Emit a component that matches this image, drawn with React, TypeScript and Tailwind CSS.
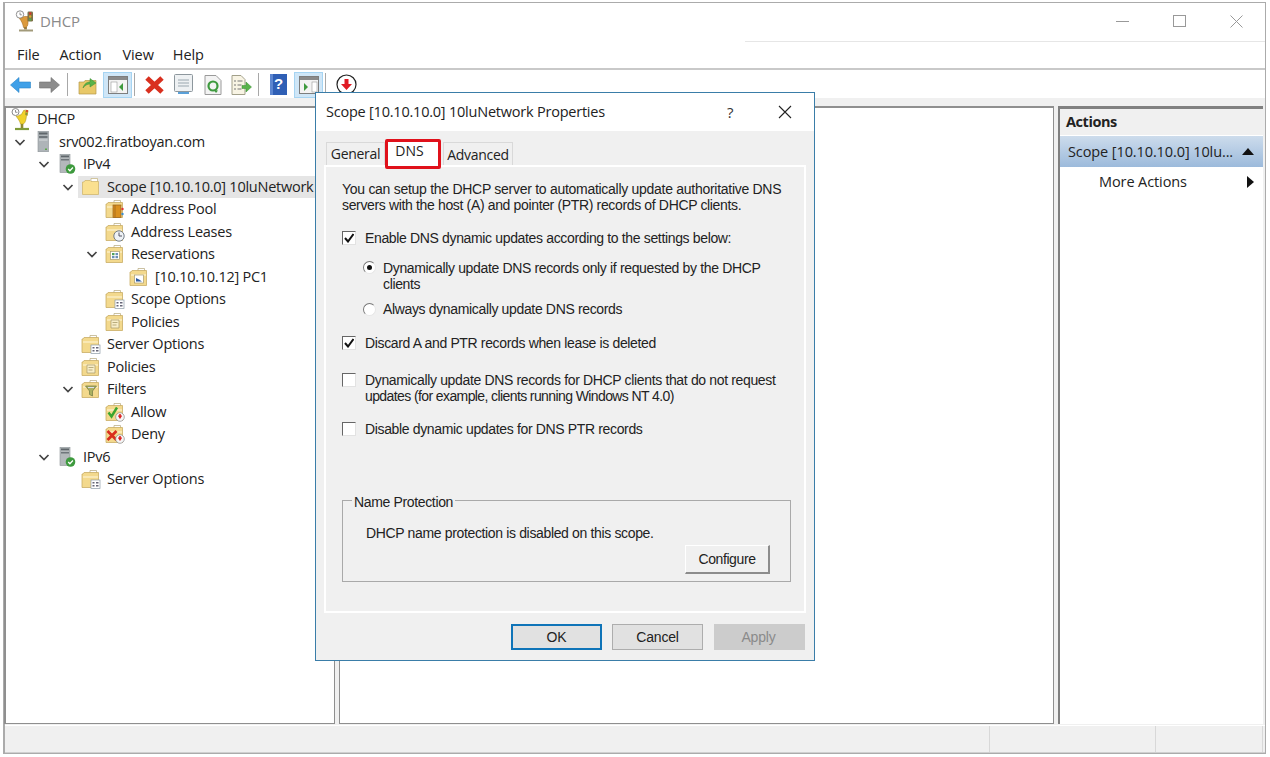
import React from "react";

const ui = "font-['Open_Sans','Noto_Sans',sans-serif]";
const dlg = "font-['Liberation_Sans',Arial,sans-serif]";

const Trophy = () => (
  <svg width="20" height="23" viewBox="0 0 20 23" className="shrink-0 -ml-[1px]">
    <circle cx="4.500" cy="4" r="3.500" fill="#fff" stroke="#8a8a8a" strokeWidth="1" />
    <path d="M4.500 2v2.300h2" fill="none" stroke="#777" strokeWidth=".8" />
    <path d="M5 8c3 1 3-2 5-1l3-5 3 2-1 7c-.5 3-2 5-3 5H9.500C9 13 7 11 5 8z" fill="#f0d22c" stroke="#b59a20" strokeWidth=".6" />
    <path d="M14.500 1.500l3 1-1 5.500-2.500-1z" fill="#c2a035" />
    <circle cx="16" cy="3" r="1" fill="#d9342a" />
    <circle cx="15.500" cy="6" r="1" fill="#7a9a3a" />
    <path d="M11 16v4" stroke="#8f8a30" strokeWidth="2.600" />
    <path d="M4 21h14" stroke="#7f9a3a" strokeWidth="2.200" />
  </svg>
);

const TitleTrophy = () => (
  <svg width="20" height="22" viewBox="0 0 20 22" className="shrink-0">
    <circle cx="5" cy="4.500" r="3.700" fill="#fff" stroke="#8f8f8f" strokeWidth="1" />
    <path d="M5 2.500v2.300h1.800" fill="none" stroke="#777" strokeWidth=".8" />
    <path d="M4.500 8.500c3 .5 3-2 5-2h3.500v6.500c0 3-1.500 4.500-3 4.500H8.500C8 14 6.500 11 4.500 8.500z" fill="#dc9a3c" stroke="#a8702a" strokeWidth=".6" />
    <rect x="12.500" y="1.500" width="5.500" height="10" rx="1.200" fill="#7d7348" />
    <circle cx="15.200" cy="3.500" r="1.200" fill="#d9342a" />
    <circle cx="15.200" cy="6.500" r="1.200" fill="#e0a92a" />
    <circle cx="15.200" cy="9.500" r="1.200" fill="#5aa84a" />
    <path d="M10.500 17v2.500" stroke="#9a7a3a" strokeWidth="2.800" />
    <path d="M4 20.500h14" stroke="#a29a7a" strokeWidth="2" />
  </svg>
);

const Chevron = () => (
  <svg width="14" height="14" viewBox="0 0 14 14">
    <path d="M2.500 5l4.500 4.500L11.500 5" fill="none" stroke="#444" strokeWidth="1.700" />
  </svg>
);

const Server = () => (
  <svg width="20" height="21" viewBox="0 0 20 21" className="shrink-0">
    <rect x="5" y="0" width="10.500" height="21" fill="#aeb4b8" stroke="#8d9396" strokeWidth=".6" />
    <rect x="6" y="1.500" width="8.500" height="2" fill="#5f666b" />
    <rect x="6" y="5" width="8.500" height="2" fill="#6f767b" />
    <rect x="6" y="8.500" width="8.500" height="1" fill="#d8dcde" />
    <rect x="12" y="17.500" width="2" height="1.500" fill="#5aa84a" />
  </svg>
);

const Ip = () => (
  <svg width="20" height="20" viewBox="0 0 20 20" className="shrink-0">
    <rect x="3" y="0" width="10" height="18.500" fill="#b3b8bb" stroke="#8d9396" strokeWidth=".6" />
    <rect x="4" y="1.500" width="8" height="1.800" fill="#5f666b" />
    <rect x="4" y="5" width="8" height="1.500" fill="#6f767b" />
    <circle cx="13.500" cy="15" r="4.800" fill="#3e9a3e" />
    <path d="M11.200 15l1.700 1.700 3-3.200" fill="none" stroke="#fff" strokeWidth="1.300" />
  </svg>
);

const Folder = ({ children }: { children?: React.ReactNode }) => (
  <svg width="20" height="20" viewBox="0 0 20 20" className="shrink-0">
    <path d="M9 1.500h6.500v4H9z" fill="#fff" stroke="#b5a67a" strokeWidth=".7" />
    <path d="M1 5h1l1-1.500h5L9 3.500h8.500V18.500H1z" fill="#f3d98d" stroke="#c9ad66" strokeWidth=".8" />
    <path d="M2 7h15v2H2z" fill="#f9e8b4" />
    {children}
  </svg>
);

const Grid = () => (
  <g>
    <rect x="10" y="11" width="9" height="8.500" fill="#fff" stroke="#8c9aa5" strokeWidth=".7" />
    <path d="M11.500 13h2v1.500h-2zM15 13h2.500v1.500H15zM11.500 16h2v1.500h-2zM15 16h2.500v1.500H15z" fill="#667" />
  </g>
);
const Doc = () => (
  <g>
    <path d="M6 8h8v8H6z" fill="#f8eec8" stroke="#a79a6a" strokeWidth=".7" />
    <path d="M7.500 10.500h5M7.500 13h4" stroke="#a79a6a" strokeWidth=".8" />
  </g>
);
const RedDown = () => (
  <g>
    <circle cx="15" cy="15" r="4.300" fill="#f6f6f6" stroke="#888" strokeWidth=".7" />
    <path d="M13 13.500h4v.500L15 17l-2-3z" fill="#d22" />
    <rect x="14.200" y="12" width="1.600" height="2.500" fill="#d22" />
  </g>
);

const icons: Record<string, React.ReactNode> = {
  trophy: <Trophy />,
  server: <Server />,
  ip: <Ip />,
  scope: (
    <svg width="20" height="20" viewBox="0 0 20 20" className="shrink-0">
      <path d="M10 1.500h6.500v4H10z" fill="#fff" stroke="#c3b27a" strokeWidth=".7" />
      <path d="M1.500 5h1.500l1-1.500h5l1 1h7.500v13H1.500z" fill="#fae08f" stroke="#d0b86e" strokeWidth=".8" />
    </svg>
  ),
  pool: (
    <Folder>
      <rect x="8" y="6" width="8" height="12.500" fill="#d9901f" stroke="#98621a" strokeWidth=".7" />
      <path d="M10 6v12.500" stroke="#98621a" strokeWidth=".7" />
      <circle cx="17.500" cy="10" r="1.200" fill="#d33" />
      <circle cx="17.500" cy="15" r="1.200" fill="#3a8ecf" />
    </Folder>
  ),
  leases: (
    <Folder>
      <circle cx="14" cy="14" r="5.200" fill="#eef2f6" stroke="#66717c" strokeWidth=".9" />
      <path d="M14 10.500V14h3" fill="none" stroke="#445" strokeWidth=".9" />
    </Folder>
  ),
  reservations: (
    <Folder>
      <rect x="5.500" y="7.500" width="9" height="8" fill="#fff" stroke="#a69a6e" strokeWidth=".7" />
      <rect x="7" y="9" width="2.500" height="2.200" fill="#4fa05a" />
      <rect x="10.500" y="9" width="2.500" height="2.200" fill="#6a8fb8" />
      <rect x="7" y="12" width="2.500" height="2.200" fill="#6a8fb8" />
      <rect x="10.500" y="12" width="2.500" height="2.200" fill="#6a8fb8" />
    </Folder>
  ),
  pc: (
    <Folder>
      <rect x="5.500" y="8" width="9" height="8" fill="#fff" stroke="#a69a6e" strokeWidth=".7" />
      <path d="M7 14.500v-3.500l3 1.500 3 2z" fill="#2d5aa0" />
    </Folder>
  ),
  options: (
    <Folder>
      <Grid />
    </Folder>
  ),
  policy: (
    <Folder>
      <Doc />
    </Folder>
  ),
  filters: (
    <Folder>
      <path d="M4.500 7h11l-4 5v5l-3-1.500V12z" fill="#a9b060" stroke="#6f7a45" strokeWidth=".7" />
      <path d="M7 8.500h6" stroke="#dde" strokeWidth="1" />
    </Folder>
  ),
  allow: (
    <Folder>
      <path d="M3.500 10.500l3 4 5.500-9" fill="none" stroke="#3aa52e" strokeWidth="2.400" />
      <RedDown />
    </Folder>
  ),
  deny: (
    <Folder>
      <path d="M2.500 7l9 9M11.500 7l-9 9" stroke="#d92f1e" strokeWidth="2.800" />
      <RedDown />
    </Folder>
  ),
};

type Row = { level: number; label: string; icon: string; open?: boolean; sel?: boolean };
const rows: Row[] = [
  { level: 0, label: "DHCP", icon: "trophy" },
  { level: 1, label: "srv002.firatboyan.com", icon: "server", open: true },
  { level: 2, label: "IPv4", icon: "ip", open: true },
  { level: 3, label: "Scope [10.10.10.0] 10luNetwork", icon: "scope", open: true, sel: true },
  { level: 4, label: "Address Pool", icon: "pool" },
  { level: 4, label: "Address Leases", icon: "leases" },
  { level: 4, label: "Reservations", icon: "reservations", open: true },
  { level: 5, label: "[10.10.10.12] PC1", icon: "pc" },
  { level: 4, label: "Scope Options", icon: "options" },
  { level: 4, label: "Policies", icon: "policy" },
  { level: 3, label: "Server Options", icon: "options" },
  { level: 3, label: "Policies", icon: "policy" },
  { level: 3, label: "Filters", icon: "filters", open: true },
  { level: 4, label: "Allow", icon: "allow" },
  { level: 4, label: "Deny", icon: "deny" },
  { level: 2, label: "IPv6", icon: "ip", open: true },
  { level: 3, label: "Server Options", icon: "options" },
];
const indent = ["pl-[6px]", "pl-[7px]", "pl-[31px]", "pl-[55px]", "pl-[79px]", "pl-[103px]"];

const TreeRow = ({ r }: { r: Row }) => (
  <div className={`flex items-center h-[22.5px] ${indent[r.level]}`}>
    {r.level > 0 && (
      <span className="w-[14px] mr-[3px] flex items-center shrink-0">{r.open && <Chevron />}</span>
    )}
    <span className={`flex items-center flex-1 h-[22px] pl-[3px] ${r.level === 0 ? "-ml-[3px]" : ""} ${r.sel ? "bg-[#e5e5e5]" : ""}`}>
      {icons[r.icon]}
      <span className="ml-[6px] text-[14.5px] tracking-[-0.25px] text-[#222] whitespace-nowrap">{r.label}</span>
    </span>
  </div>
);

const ToolBtn = ({ children, active, className = "" }: { children: React.ReactNode; active?: boolean; className?: string }) => (
  <span className={`relative flex items-center justify-center h-[26px] shrink-0 ${active ? "bg-[#cfe6f7] border border-[#a6d4f2]" : ""} ${className}`}>
    {children}
  </span>
);
const Sep = ({ className = "" }: { className?: string }) => <span className={`w-[1px] h-[23px] bg-[#a8a8a8] shrink-0 ${className}`} />;

const Toolbar = () => (
  <div className="flex items-center h-[28px] bg-white pl-[5px] pt-[1px] shrink-0">
    <ToolBtn className="w-[21px]">
      <svg width="21" height="18" viewBox="0 0 21 18"><path d="M0.500 9L9 1.500V6h11.500v6H9v4.500z" fill="#3fa0e8" stroke="#2a84c8" strokeWidth=".6" /></svg>
    </ToolBtn>
    <ToolBtn className="w-[21px] ml-[8px]">
      <svg width="21" height="18" viewBox="0 0 21 18"><path d="M20.500 9L12 1.500V6H.5v6H12v4.500z" fill="#8c8c8c" stroke="#707070" strokeWidth=".6" /></svg>
    </ToolBtn>
    <Sep className="ml-[7px]" />
    <ToolBtn className="w-[20px] ml-[10px]">
      <svg width="20" height="20" viewBox="0 0 20 20">
        <path d="M1 7h5l1-1.500h11V19H1z" fill="#e8c868" stroke="#b59a4a" strokeWidth=".7" />
        <path d="M5 13c1-4 4-6 7-6V3.500l6 4.500-6 4v-3c-3 0-5 1.500-7 4z" fill="#58b34a" stroke="#3a8c32" strokeWidth=".5" />
      </svg>
    </ToolBtn>
    <ToolBtn active className="w-[29px] ml-[5px]">
      <svg width="20" height="18" viewBox="0 0 20 18">
        <rect x=".5" y=".5" width="19" height="17" fill="#f3f3f3" stroke="#7d7d7d" />
        <rect x="1" y="1" width="18" height="3" fill="#8a8a8a" />
        <rect x="3" y="6" width="6" height="10" fill="#fff" stroke="#999" strokeWidth=".6" />
        <path d="M15 7v8l-4-4z" fill="#3e9a3e" />
      </svg>
    </ToolBtn>
    <Sep className="ml-[2px]" />
    <ToolBtn className="w-[21px] ml-[9px]">
      <svg width="21" height="20" viewBox="0 0 21 20"><path d="M3 3l15 14M18 3L3 17" stroke="#d9301f" strokeWidth="5" /></svg>
    </ToolBtn>
    <ToolBtn className="w-[19px] ml-[9px]">
      <svg width="19" height="21" viewBox="0 0 19 21">
        <rect x=".5" y=".5" width="18" height="17" rx="1" fill="#eef1f3" stroke="#8d979d" />
        <path d="M4 6h11M4 9h11M4 12h11" stroke="#9aa8b0" strokeWidth="1.200" />
        <path d="M4 19h11" stroke="#5aa0d8" strokeWidth="2" />
      </svg>
    </ToolBtn>
    <ToolBtn className="w-[18px] ml-[11px]">
      <svg width="18" height="20" viewBox="0 0 18 20">
        <path d="M1 .5h11l5 5V19.500H1z" fill="#f3f3f3" stroke="#9a9a9a" />
        <circle cx="9" cy="11" r="4.500" fill="none" stroke="#3e9a3e" strokeWidth="2.200" />
        <path d="M10 15l4 .5-2 2.500z" fill="#3e9a3e" />
      </svg>
    </ToolBtn>
    <ToolBtn className="w-[21px] ml-[9px]">
      <svg width="21" height="20" viewBox="0 0 21 20">
        <path d="M1 .5h9l4 4V19.500H1z" fill="#f8f4e4" stroke="#a2a08a" />
        <path d="M3 6h2M3 10h2M3 14h2M6.500 6h5M6.500 10h4M6.500 14h4" stroke="#777" strokeWidth="1" />
        <path d="M11 10.500h4V7l5.500 5-5.500 5v-3.500h-4z" fill="#58b34a" stroke="#3a8c32" strokeWidth=".5" />
      </svg>
    </ToolBtn>
    <Sep className="ml-[6px]" />
    <ToolBtn className="w-[17px] ml-[11px]">
      <svg width="17" height="21" viewBox="0 0 17 21">
        <rect width="17" height="21" fill="#2f5fb5" />
        <rect x="0" y="0" width="3" height="21" fill="#5c86d0" />
      </svg>
      <span className={`absolute text-white font-bold text-[15px] ${dlg}`}>?</span>
    </ToolBtn>
    <ToolBtn active className="w-[29px] ml-[7px]">
      <svg width="20" height="18" viewBox="0 0 20 18">
        <rect x=".5" y=".5" width="19" height="17" fill="#f3f3f3" stroke="#7d7d7d" />
        <rect x="1" y="1" width="18" height="3" fill="#8a8a8a" />
        <rect x="13" y="6" width="5" height="10" fill="#fff" stroke="#999" strokeWidth=".6" />
        <path d="M5 7v8l4-4z" fill="#3e9a3e" />
      </svg>
    </ToolBtn>
    <Sep className="ml-[2px]" />
    <ToolBtn className="w-[21px] ml-[10px]">
      <svg width="21" height="21" viewBox="0 0 21 21">
        <circle cx="10.500" cy="10.500" r="9.500" fill="#fff" stroke="#222" strokeWidth="1.200" />
        <path d="M8.500 5h4v5H16l-5.500 6L5 10h3.500z" fill="#e01b24" />
      </svg>
    </ToolBtn>
  </div>
);

const CheckBox = ({ checked }: { checked?: boolean }) => (
  <span className="w-[14px] h-[14px] bg-white border border-[#e2e2e2] border-t-[#666] border-l-[#666] flex items-center justify-center shrink-0">
    {checked && (
      <svg width="10" height="10" viewBox="0 0 10 10"><path d="M1 5l3 3.500L9.500 1" fill="none" stroke="#111" strokeWidth="2" /></svg>
    )}
  </span>
);
const Radio = ({ checked }: { checked?: boolean }) => (
  <span className="w-[13px] h-[13px] rounded-full bg-white border border-[#e6e6e6] border-t-[#777] border-l-[#777] flex items-center justify-center shrink-0">
    {checked && <span className="w-[5px] h-[5px] rounded-full bg-[#111]" />}
  </span>
);

const DlgBtn = ({ children, className = "" }: { children: React.ReactNode; className?: string }) => (
  <span className={`flex items-center justify-center h-[26px] text-[14px] tracking-[-0.2px] ${className}`}>{children}</span>
);

const Dialog = () => (
  <div className={`absolute left-[315px] top-[92px] w-[500px] h-[569px] bg-[#f0f0f0] border border-[#3a7da8] flex flex-col ${dlg} text-[14px] leading-[16px] text-[#222] tracking-[-0.35px]`}>
    <div className="h-[38px] bg-white flex items-center shrink-0">
      <span className={`ml-[10px] text-[14.5px] tracking-[-0.22px] text-[#222] ${ui}`}>Scope [10.10.10.0] 10luNetwork Properties</span>
      <span className={`ml-auto text-[15px] text-[#333] ${ui}`}>?</span>
      <span className="ml-[45px] mr-[22px] flex">
        <svg width="14" height="14" viewBox="0 0 14 14"><path d="M1 1l12 12M13 1L1 13" stroke="#222" strokeWidth="1.100" /></svg>
      </span>
    </div>
    <div className="relative flex items-end h-[34px] pl-[10px] shrink-0">
      <span className={`flex items-center justify-center w-[59px] h-[23px] bg-[#f0f0f0] border border-b-0 border-[#d9d9d9] text-[14px] ${ui} tracking-[-0.3px]`}>General</span>
      <span className="relative z-10 flex items-center justify-center w-[56px] h-[30px] bg-white border-[3px] border-[#e0111b] rounded-[2px] -mb-[4px]">
        <span className={`text-[14px] -mt-[6px] -ml-[7px] tracking-normal ${ui}`}>DNS</span>
      </span>
      <span className={`ml-[2px] flex items-center justify-center w-[70px] h-[23px] bg-[#f0f0f0] border border-b-0 border-[#d9d9d9] text-[14px] ${ui} tracking-[-0.3px] pt-[1px]`}>Advanced</span>
    </div>
    <div className="mx-[8px] h-[448px] bg-[#f0f0f0] border-2 border-white shrink-0 pl-[16px] pr-[12px] pt-[14px] flex flex-col">
      <p>
        <span className="tracking-[-0.28px]">You can setup the DHCP server to automatically update authoritative DNS</span>
        <br />
        servers with the host (A) and pointer (PTR) records of DHCP clients.
      </p>
      <div className="flex items-center gap-[9px] mt-[17px] h-[16px]">
        <CheckBox checked />
        <span>Enable DNS dynamic updates according to the settings below:</span>
      </div>
      <div className="flex items-start gap-[7px] mt-[14px] ml-[21px]">
        <span className="pt-[1px]"><Radio checked /></span>
        <span>
          Dynamically update DNS records only if requested by the DHCP
          <br />
          clients
        </span>
      </div>
      <div className="flex items-center gap-[7px] mt-[9px] ml-[21px] h-[16px]">
        <Radio />
        <span>Always dynamically update DNS records</span>
      </div>
      <div className="flex items-center gap-[9px] mt-[18px] h-[16px]">
        <CheckBox checked />
        <span>Discard A and PTR records when lease is deleted</span>
      </div>
      <div className="flex items-start gap-[9px] mt-[21px]">
        <span className="pt-[1px]"><CheckBox /></span>
        <span>
          Dynamically update DNS records for DHCP clients that do not request
          <br />
          <span className="tracking-[-0.6px]">updates (for example, clients running Windows NT 4.0)</span>
        </span>
      </div>
      <div className="flex items-center gap-[9px] mt-[17px] h-[16px]">
        <CheckBox />
        <span>Disable dynamic updates for DNS PTR records</span>
      </div>
      <fieldset className="mt-[55px] h-[90px] border border-[#a9a9a9] w-[449px] pl-[23px] pr-[20px]">
        <legend className="px-[2px] -ml-[14px] text-[14px] translate-y-[2px]">Name Protection</legend>
        <p className="mt-[17px]">DHCP name protection is disabled on this scope.</p>
        <div className="flex justify-end mt-[4px]">
          <span className="flex items-center justify-center w-[85px] h-[29px] bg-[#f0f0f0] border border-white border-r-[2px] border-b-[2px] border-r-[#8c8c8c] border-b-[#8c8c8c] tracking-[-0.4px]">Configure</span>
        </div>
      </fieldset>
    </div>
    <div className="flex justify-end gap-[10px] pr-[9px] pt-[11px]">
      <DlgBtn className="w-[91px] bg-[#e1e1e1] border-2 border-[#0f74b8]">OK</DlgBtn>
      <DlgBtn className="w-[91px] mr-[1px] bg-[#e1e1e1] border border-[#adadad]">Cancel</DlgBtn>
      <DlgBtn className="w-[91px] bg-[#cccccc] text-[#8a8a8a] pr-[2px]">Apply</DlgBtn>
    </div>
  </div>
);

export default function App() {
  return (
    <div className={`relative w-[1270px] h-[757px] overflow-hidden bg-white pl-[3px] pt-[2px] ${ui}`}>
      <div className="w-[1263px] h-[752px] border border-[#ababab] border-l-2 flex flex-col bg-[#f0f0f0]">
        <div className="h-[38px] bg-white flex items-center pl-[10px] pb-[2px] shrink-0">
          <TitleTrophy />
          <span className="ml-[5px] text-[15px] text-[#8a8a8a] tracking-[-0.1px]">DHCP</span>
          <span className="ml-auto flex items-center">
            <span className="w-[13px] h-[1px] bg-[#999]" />
            <span className="ml-[44px] w-[13px] h-[12px] border border-[#999]" />
            <span className="ml-[44px] mr-[22px] flex">
              <svg width="13" height="13" viewBox="0 0 13 13"><path d="M.5.500l12 12M12.500.500l-12 12" stroke="#999" strokeWidth="1" /></svg>
            </span>
          </span>
        </div>
        <div className="relative h-[29px] bg-white flex items-center pl-[12px] text-[14.5px] text-[#222] tracking-[-0.1px] border-b-2 border-[#c9c9c9] shrink-0">
          <span className="absolute right-0 top-0 left-[740px] h-[1px] bg-[#e6e6e6]" />
          <span>File</span>
          <span className="ml-[20px]">Action</span>
          <span className="ml-[21px]">View</span>
          <span className="ml-[19px]">Help</span>
        </div>
        <Toolbar />
        <div className="flex flex-1 min-h-0 pt-[8px] pb-[1px] gap-[4px] pr-[1px]">
          <div className="w-[331px] bg-white border-l-2 border-t-2 border-[#8f8f8f] border-r border-b -ml-[1px]">
            {rows.map((r, i) => (
              <TreeRow key={i} r={r} />
            ))}
          </div>
          <div className="w-[715px] bg-white border border-[#8f8f8f] border-t-2" />
          <div className="flex-1 bg-white border-l-2 border-t-[3px] border-[#808080] mr-[1px]">
            <div className="h-[26px] bg-[#f0f0f0] flex items-center pl-[6px] text-[14.5px] font-bold tracking-[-0.45px] text-[#222]">Actions</div>
            <div className="h-[31px] mt-[1px] bg-gradient-to-b from-[#cddcec] to-[#9cbadb] flex items-center pl-[8px] pr-[9px] text-[14.5px] text-[#222] tracking-[-0.1px]">
              <span className="whitespace-nowrap">Scope [10.10.10.0] 10lu...</span>
              <svg className="ml-auto" width="12" height="7" viewBox="0 0 12 7"><path d="M6 0l6 7H0z" fill="#111" /></svg>
            </div>
            <div className="h-[30px] flex items-center pl-[39px] pr-[9px] text-[14.5px] text-[#222] tracking-[-0.1px]">
              <span>More Actions</span>
              <svg className="ml-auto" width="7" height="12" viewBox="0 0 7 12"><path d="M0 0l7 6-7 6z" fill="#111" /></svg>
            </div>
          </div>
        </div>
        <div className="h-[28px] flex border-t border-[#fff] border-b border-b-[#d0d0d0] shrink-0">
          <span className="w-[985px] border-r border-[#d8d8d8]" />
          <span className="w-[166px] border-r border-[#d8d8d8]" />
          <span className="w-[107px] border-r border-[#d8d8d8]" />
        </div>
      </div>
      <Dialog />
    </div>
  );
}
